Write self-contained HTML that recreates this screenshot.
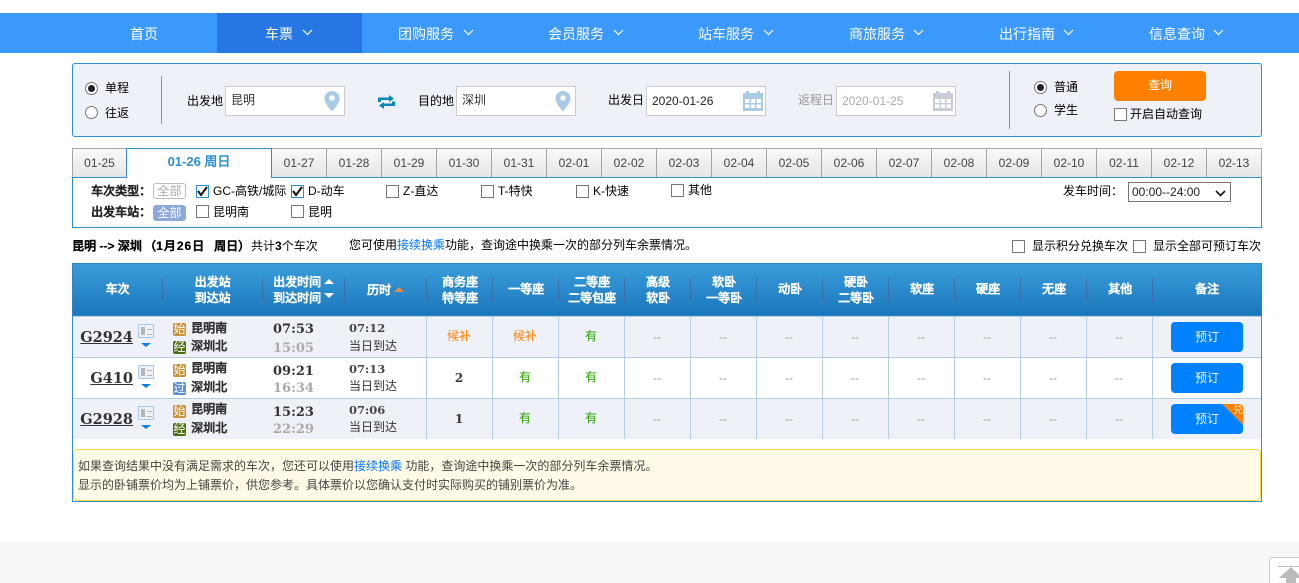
<!DOCTYPE html>
<html lang="zh"><head><meta charset="utf-8"><title>车票</title>
<style>
html{overflow:hidden;height:583px;width:1299px}
html,body{margin:0;padding:0;background:#fff}
body{width:1299px;height:583px;position:relative;overflow:hidden;font:12px/16px "Liberation Sans","WenQuanYi Zen Hei",sans-serif;color:#000}
.a,.a *{box-sizing:border-box}
.a{position:absolute;white-space:nowrap}
.nav{color:#fff;font-size:14px;line-height:20px;top:24px}
.chev{top:29px;width:11px;height:7px}
.inp{background:#fff;border:1px solid #ccc;height:30px;top:86px}
.radio{width:13px;height:13px;border:1px solid #767676;border-radius:50%;background:#fff}
.radio.on:after{content:"";position:absolute;left:2px;top:2px;width:7px;height:7px;border-radius:50%;background:#222}
.cb{width:13px;height:13px;border:1px solid #767676;background:#fff}
.cb.on{border-color:#2b8fd0}
.cb svg{position:absolute;left:-1px;top:-1px}
.tab{top:148px;height:29px;width:55px;background:linear-gradient(#f9f9f9,#e6e6e6);border:1px solid #a5a5a5;border-left:0;border-bottom:0;text-align:center;font:12px/29px "Liberation Sans",sans-serif;color:#444}
.bd{font-weight:bold;text-shadow:.3px 0 currentColor}
.th{color:#fff;font-weight:bold;text-shadow:.3px 0 #fff;text-align:center;line-height:16px;font-size:12px}
.sep{width:1px;height:24px;top:278px;background:#3b6ea8}
.vl{width:1px;top:316px;height:123px;background:#b1cfe0}
.no{font:bold 14.500px/20px "DejaVu Serif",serif;color:#333;text-decoration:underline;text-align:right;width:72px;left:61px}
.card{left:138px;width:16px;height:14px;border:1px solid #a8c6e6;background:#edf2f9}
.card:before{content:"";position:absolute;left:2px;top:2px;width:4px;height:8px;background:#b5b5b5}
.card:after{content:"";position:absolute;left:8px;top:4px;width:5px;height:4px;border-top:1px solid #b5b5b5;border-bottom:1px solid #b5b5b5}
.tri{left:141px;width:0;height:0;border:5px solid transparent;border-top:4px solid #0a7fe8;border-bottom:0}
.ic{left:173px;width:13px;height:13px;border-radius:2px;color:#fff;font-size:12px;line-height:13px;text-align:center;overflow:hidden}
.st{left:191px;font-weight:bold;text-shadow:.3px 0 #333;font-size:12px;line-height:16px;color:#333}
.t1{left:273px;font:bold 13px/16px "DejaVu Serif",serif;color:#333}
.t2{left:273px;font:bold 13px/16px "DejaVu Serif",serif;color:#aaa}
.d1{left:349px;font:bold 11.500px/16px "DejaVu Serif",serif;color:#444}
.d2{left:349px;font-size:12px;line-height:16px;color:#333}
.c{text-align:center;width:66px;font-size:12px;line-height:16px;margin-left:-1px}
.o{color:#ff8000}.g{color:#2aa000}.x{color:#999}
.b{color:#333;font:bold 12px/16px "DejaVu Serif",serif}
.btn{left:1171px;width:72px;height:30px;border-radius:4px;background:#0081ff;color:#fff;text-align:center;line-height:30px;font-size:12px}
</style></head><body>

<div class="a" style="left:0;top:13px;width:1299px;height:40px;background:#3b99fc"></div>
<div class="a" style="left:217px;top:13px;width:145px;height:40px;background:#2676e3"></div>
<div class="a nav" style="left:130px">首页</div>
<div class="a nav" style="left:265px">车票</div>
<div class="a nav" style="left:398px">团购服务</div>
<div class="a nav" style="left:548px">会员服务</div>
<div class="a nav" style="left:698px">站车服务</div>
<div class="a nav" style="left:849px">商旅服务</div>
<div class="a nav" style="left:999px">出行指南</div>
<div class="a nav" style="left:1149px">信息查询</div>
<svg class="a chev" style="left:302px" viewBox="0 0 11 7"><path d="M1 1l4.500 4.500L10 1" fill="none" stroke="#fff" stroke-width="1.200"/></svg>
<svg class="a chev" style="left:463px" viewBox="0 0 11 7"><path d="M1 1l4.500 4.500L10 1" fill="none" stroke="#fff" stroke-width="1.200"/></svg>
<svg class="a chev" style="left:613px" viewBox="0 0 11 7"><path d="M1 1l4.500 4.500L10 1" fill="none" stroke="#fff" stroke-width="1.200"/></svg>
<svg class="a chev" style="left:763px" viewBox="0 0 11 7"><path d="M1 1l4.500 4.500L10 1" fill="none" stroke="#fff" stroke-width="1.200"/></svg>
<svg class="a chev" style="left:913px" viewBox="0 0 11 7"><path d="M1 1l4.500 4.500L10 1" fill="none" stroke="#fff" stroke-width="1.200"/></svg>
<svg class="a chev" style="left:1063px" viewBox="0 0 11 7"><path d="M1 1l4.500 4.500L10 1" fill="none" stroke="#fff" stroke-width="1.200"/></svg>
<svg class="a chev" style="left:1213px" viewBox="0 0 11 7"><path d="M1 1l4.500 4.500L10 1" fill="none" stroke="#fff" stroke-width="1.200"/></svg>

<div class="a" style="left:72px;top:63px;width:1190px;height:74px;background:#eef1f8;border:1px solid #2b8fd0;border-radius:3px"></div>
<div class="a radio on" style="left:85px;top:82px"></div><div class="a" style="left:105px;top:80px">单程</div>
<div class="a radio" style="left:85px;top:106px"></div><div class="a" style="left:105px;top:105px">往返</div>
<div class="a" style="left:161px;top:76px;width:1px;height:48px;background:#5c9cc7"></div>
<div class="a" style="left:187px;top:93px">出发地</div>
<div class="a inp" style="left:225px;width:120px"></div><div class="a" style="left:231px;top:92px;color:#333">昆明</div>
<svg class="a" style="left:324px;top:91px" width="16" height="21" viewBox="0 0 16 21"><path d="M8 0C3.500 0 0.500 3.300 0.500 7.500 0.500 12 5.500 17.500 8 20.500 10.500 17.500 15.500 12 15.500 7.500 15.500 3.300 12.500 0 8 0Z" fill="#a9cbe6"/><circle cx="8" cy="7" r="2.800" fill="#fff"/></svg>
<svg class="a" style="left:378px;top:95px" width="17" height="14" viewBox="0 0 17 14"><path d="M0 7V2.500h11V0l5 3.500L11 7V5H3v2z" fill="#0b86ba"/><path d="M17 6.500V11H6v3L1 10.500 6 7v1.500h8v-2z" fill="#0b86ba"/></svg>
<div class="a" style="left:418px;top:93px">目的地</div>
<div class="a inp" style="left:456px;width:120px"></div><div class="a" style="left:462px;top:92px;color:#333">深圳</div>
<svg class="a" style="left:555px;top:91px" width="16" height="21" viewBox="0 0 16 21"><path d="M8 0C3.500 0 0.500 3.300 0.500 7.500 0.500 12 5.500 17.500 8 20.500 10.500 17.500 15.500 12 15.500 7.500 15.500 3.300 12.500 0 8 0Z" fill="#a9cbe6"/><circle cx="8" cy="7" r="2.800" fill="#fff"/></svg>
<div class="a" style="left:608px;top:92px">出发日</div>
<div class="a inp" style="left:646px;width:120px"></div><div class="a" style="left:652px;top:93px;color:#222">2020-01-26</div>
<svg class="a" style="left:743px;top:91px" width="20" height="20" viewBox="0 0 20 20"><path d="M0 2h3V0h3v2h8V0h3v2h3v18H0z" fill="#a9cbe6"/><path d="M2 8h4.500v4H2zM8 8h4v4H8zM13.500 8H18v4h-4.500zM2 13.500h4.500V17H2zM8 13.500h4V17H8zM13.500 13.500H18V17h-4.500z" fill="#fff"/></svg>
<div class="a" style="left:798px;top:92px;color:#999">返程日</div>
<div class="a inp" style="left:836px;width:120px"></div><div class="a" style="left:842px;top:93px;color:#aaa">2020-01-25</div>
<svg class="a" style="left:933px;top:91px" width="20" height="20" viewBox="0 0 20 20"><path d="M0 2h3V0h3v2h8V0h3v2h3v18H0z" fill="#c8ccd8"/><path d="M2 8h4.500v4H2zM8 8h4v4H8zM13.500 8H18v4h-4.500zM2 13.500h4.500V17H2zM8 13.500h4V17H8zM13.500 13.500H18V17h-4.500z" fill="#fff"/></svg>
<div class="a" style="left:1009px;top:71px;width:1px;height:58px;background:#5c9cc7"></div>
<div class="a radio on" style="left:1034px;top:81px"></div><div class="a" style="left:1054px;top:79px">普通</div>
<div class="a radio" style="left:1034px;top:104px"></div><div class="a" style="left:1054px;top:102px">学生</div>
<div class="a" style="left:1114px;top:71px;width:92px;height:30px;background:#ff8000;border-radius:4px;color:#fff;text-align:center;line-height:28px">查询</div>
<div class="a cb" style="left:1114px;top:108px"></div><div class="a" style="left:1130px;top:106px">开启自动查询</div>

<div class="a" style="left:72px;top:177px;width:1190px;height:51px;border:1px solid #2b8fd0;background:#fff"></div>
<div class="a tab" style="left:72px;width:55px;border-left:1px solid #a5a5a5">01-25</div>
<div class="a" style="left:126px;top:148px;width:146px;height:30px;background:#fff;border:1px solid #2b8fd0;border-bottom:0;text-align:center;font:bold 13px/26px 'Liberation Sans','WenQuanYi Zen Hei',sans-serif;color:#2b8fd0">01-26 周日</div>
<div class="a tab" style="left:272px">01-27</div><div class="a tab" style="left:327px">01-28</div><div class="a tab" style="left:382px">01-29</div><div class="a tab" style="left:437px">01-30</div><div class="a tab" style="left:492px">01-31</div><div class="a tab" style="left:547px">02-01</div><div class="a tab" style="left:602px">02-02</div><div class="a tab" style="left:657px">02-03</div><div class="a tab" style="left:712px">02-04</div><div class="a tab" style="left:767px">02-05</div><div class="a tab" style="left:822px">02-06</div><div class="a tab" style="left:877px">02-07</div><div class="a tab" style="left:932px">02-08</div><div class="a tab" style="left:987px">02-09</div><div class="a tab" style="left:1042px">02-10</div><div class="a tab" style="left:1097px">02-11</div><div class="a tab" style="left:1152px">02-12</div><div class="a tab" style="left:1207px">02-13</div>

<div class="a bd" style="left:91px;top:183px;color:#222">车次类型：</div>
<div class="a" style="left:153px;top:183px;width:33px;height:16px;border:1px solid #bbb;border-radius:3px;text-align:center;line-height:14px;color:#aaa">全部</div>
<div class="a cb on" style="left:196px;top:185px"><svg width="13" height="13" viewBox="0 0 13 13"><path d="M2 6l3 4 6-8" fill="none" stroke="#111" stroke-width="2"/></svg></div><div class="a" style="left:213px;top:183px">GC-高铁/城际</div>
<div class="a cb on" style="left:291px;top:185px"><svg width="13" height="13" viewBox="0 0 13 13"><path d="M2 6l3 4 6-8" fill="none" stroke="#111" stroke-width="2"/></svg></div><div class="a" style="left:308px;top:183px">D-动车</div>
<div class="a cb" style="left:386px;top:185px"></div><div class="a" style="left:403px;top:183px">Z-直达</div>
<div class="a cb" style="left:481px;top:185px"></div><div class="a" style="left:498px;top:183px">T-特快</div>
<div class="a cb" style="left:576px;top:185px"></div><div class="a" style="left:593px;top:183px">K-快速</div>
<div class="a cb" style="left:671px;top:184px"></div><div class="a" style="left:688px;top:182px">其他</div>
<div class="a" style="left:1063px;top:183px">发车时间：</div>
<div class="a" style="left:1128px;top:182px;width:103px;height:20px;border:1px solid #767676;line-height:18px;padding-left:3px;color:#222">00:00--24:00<svg class="a" style="left:86px;top:7px" width="11" height="7" viewBox="0 0 11 7"><path d="M1 1l4.500 4.500L10 1" fill="none" stroke="#111" stroke-width="1.600"/></svg></div>
<div class="a bd" style="left:91px;top:204px;color:#222">出发车站：</div>
<div class="a" style="left:153px;top:205px;width:33px;height:16px;background:#8ca9d9;border-radius:3px;text-align:center;line-height:16px;color:#fff">全部</div>
<div class="a cb" style="left:196px;top:205px"></div><div class="a" style="left:213px;top:204px">昆明南</div>
<div class="a cb" style="left:291px;top:205px"></div><div class="a" style="left:308px;top:204px">昆明</div>

<div class="a bd" style="left:72px;top:238px">昆明 --&gt; 深圳</div>
<div class="a bd" style="left:144px;top:238px">（<span style="letter-spacing:1px">1月26日</span></div>
<div class="a bd" style="left:214px;top:238px">周日）</div>
<div class="a" style="left:251px;top:238px">共计<b>3</b>个车次</div>
<div class="a" style="left:349px;top:237px">您可使用<span style="color:#0077ff">接续换乘</span>功能，查询途中换乘一次的部分列车余票情况。</div>
<div class="a cb" style="left:1012px;top:240px"></div><div class="a" style="left:1032px;top:238px">显示积分兑换车次</div>
<div class="a cb" style="left:1133px;top:240px"></div><div class="a" style="left:1153px;top:238px">显示全部可预订车次</div>

<div class="a" style="left:72px;top:263px;width:1190px;height:239px;border:1px solid #2b8fd0"></div>
<div class="a" style="left:72px;top:263px;width:1190px;height:53px;background:linear-gradient(#3a9ddb,#1b77bc);border:1px solid #2b84c4"></div>
<div class="a" style="left:73px;top:316px;width:1188px;height:41px;background:#eef1f8"></div>
<div class="a" style="left:73px;top:399px;width:1188px;height:40px;background:#eef1f8"></div>
<div class="a" style="left:73px;top:316px;width:1188px;height:1px;background:#b1cfe0"></div>
<div class="a" style="left:73px;top:357px;width:1188px;height:1px;background:#b1cfe0"></div>
<div class="a" style="left:73px;top:398px;width:1188px;height:1px;background:#b1cfe0"></div>

<div class="a sep" style="left:162px"></div><div class="a sep" style="left:262px"></div><div class="a sep" style="left:344px"></div><div class="a sep" style="left:426px"></div><div class="a sep" style="left:492px"></div><div class="a sep" style="left:558px"></div><div class="a sep" style="left:624px"></div><div class="a sep" style="left:690px"></div><div class="a sep" style="left:756px"></div><div class="a sep" style="left:822px"></div><div class="a sep" style="left:888px"></div><div class="a sep" style="left:954px"></div><div class="a sep" style="left:1020px"></div><div class="a sep" style="left:1086px"></div><div class="a sep" style="left:1152px"></div>
<div class="a vl" style="left:426px"></div><div class="a vl" style="left:492px"></div><div class="a vl" style="left:558px"></div><div class="a vl" style="left:624px"></div><div class="a vl" style="left:690px"></div><div class="a vl" style="left:756px"></div><div class="a vl" style="left:822px"></div><div class="a vl" style="left:888px"></div><div class="a vl" style="left:954px"></div><div class="a vl" style="left:1020px"></div><div class="a vl" style="left:1086px"></div><div class="a vl" style="left:1152px"></div>

<div class="a th" style="left:73px;width:89px;top:281px">车次</div>
<div class="a th" style="left:163px;width:99px;top:274px">出发站<br>到达站</div>
<div class="a th" style="left:273px;top:274px;text-align:left">出发时间<br>到达时间</div>
<svg class="a" style="left:324px;top:279px" width="10" height="19" viewBox="0 0 10 19"><path d="M0 5L5 0l5 5zM0 14h10l-5 5z" fill="#fff"/></svg>
<div class="a th" style="left:367px;top:282px;text-align:left">历时</div>
<svg class="a" style="left:394px;top:287px" width="10" height="5" viewBox="0 0 10 5"><path d="M0 5L5 0l5 5z" fill="#f08a3c"/></svg>
<div class="a th" style="left:427px;width:66px;top:274px">商务座<br>特等座</div>
<div class="a th" style="left:493px;width:66px;top:281px">一等座</div>
<div class="a th" style="left:559px;width:66px;top:274px">二等座<br>二等包座</div>
<div class="a th" style="left:625px;width:66px;top:274px">高级<br>软卧</div>
<div class="a th" style="left:691px;width:66px;top:274px">软卧<br>一等卧</div>
<div class="a th" style="left:757px;width:66px;top:281px">动卧</div>
<div class="a th" style="left:823px;width:66px;top:274px">硬卧<br>二等卧</div>
<div class="a th" style="left:889px;width:66px;top:281px">软座</div>
<div class="a th" style="left:955px;width:66px;top:281px">硬座</div>
<div class="a th" style="left:1021px;width:66px;top:281px">无座</div>
<div class="a th" style="left:1087px;width:66px;top:281px">其他</div>
<div class="a th" style="left:1153px;width:108px;top:281px">备注</div>

<div class="a no" style="top:328px">G2924</div><div class="a card" style="top:324px"></div><div class="a tri" style="top:343px"></div>
<div class="a ic" style="top:323px;background:#c8913c">始</div><div class="a st" style="top:320px">昆明南</div>
<div class="a ic" style="top:341px;background:#4e6e10">经</div><div class="a st" style="top:338px">深圳北</div>
<div class="a t1" style="top:322px">07:53</div><div class="a t2" style="top:341px">15:05</div>
<div class="a d1" style="top:320px">07:12</div><div class="a d2" style="top:338px">当日到达</div>

<div class="a no" style="top:369px">G410</div><div class="a card" style="top:365px"></div><div class="a tri" style="top:384px"></div>
<div class="a ic" style="top:364px;background:#c8913c">始</div><div class="a st" style="top:360px">昆明南</div>
<div class="a ic" style="top:382px;background:#5b8fd8">过</div><div class="a st" style="top:379px">深圳北</div>
<div class="a t1" style="top:364px">09:21</div><div class="a t2" style="top:381px">16:34</div>
<div class="a d1" style="top:361px">07:13</div><div class="a d2" style="top:378px">当日到达</div>

<div class="a no" style="top:410px">G2928</div><div class="a card" style="top:406px"></div><div class="a tri" style="top:425px"></div>
<div class="a ic" style="top:405px;background:#c8913c">始</div><div class="a st" style="top:401px">昆明南</div>
<div class="a ic" style="top:423px;background:#4e6e10">经</div><div class="a st" style="top:420px">深圳北</div>
<div class="a t1" style="top:405px">15:23</div><div class="a t2" style="top:422px">22:29</div>
<div class="a d1" style="top:402px">07:06</div><div class="a d2" style="top:419px">当日到达</div>

<div class="a c o" style="left:427px;top:328px">候补</div><div class="a c o" style="left:493px;top:328px">候补</div><div class="a c g" style="left:559px;top:328px">有</div>
<div class="a c x" style="left:625px;top:329px">--</div><div class="a c x" style="left:691px;top:329px">--</div><div class="a c x" style="left:757px;top:329px">--</div><div class="a c x" style="left:823px;top:329px">--</div><div class="a c x" style="left:889px;top:329px">--</div><div class="a c x" style="left:955px;top:329px">--</div><div class="a c x" style="left:1021px;top:329px">--</div><div class="a c x" style="left:1087px;top:329px">--</div>

<div class="a c b" style="left:427px;top:370px">2</div><div class="a c g" style="left:493px;top:369px">有</div><div class="a c g" style="left:559px;top:369px">有</div>
<div class="a c x" style="left:625px;top:370px">--</div><div class="a c x" style="left:691px;top:370px">--</div><div class="a c x" style="left:757px;top:370px">--</div><div class="a c x" style="left:823px;top:370px">--</div><div class="a c x" style="left:889px;top:370px">--</div><div class="a c x" style="left:955px;top:370px">--</div><div class="a c x" style="left:1021px;top:370px">--</div><div class="a c x" style="left:1087px;top:370px">--</div>

<div class="a c b" style="left:427px;top:411px">1</div><div class="a c g" style="left:493px;top:410px">有</div><div class="a c g" style="left:559px;top:410px">有</div>
<div class="a c x" style="left:625px;top:411px">--</div><div class="a c x" style="left:691px;top:411px">--</div><div class="a c x" style="left:757px;top:411px">--</div><div class="a c x" style="left:823px;top:411px">--</div><div class="a c x" style="left:889px;top:411px">--</div><div class="a c x" style="left:955px;top:411px">--</div><div class="a c x" style="left:1021px;top:411px">--</div><div class="a c x" style="left:1087px;top:411px">--</div>

<div class="a btn" style="top:322px">预订</div>
<div class="a btn" style="top:363px">预订</div>
<div class="a btn" style="top:404px;overflow:hidden">预订<div class="a" style="right:0;top:0;width:0;height:0;border-top:21px solid #ff8000;border-left:21px solid transparent"></div><div class="a" style="right:0;top:0;color:#ffe6c0;font-size:10px;line-height:13px">兑</div></div>

<div class="a" style="left:73px;top:449px;width:1188px;height:52px;background:#fffbe6;border:1px solid #fdd835;border-radius:5px"></div>
<div class="a" style="left:78px;top:457px;line-height:19px;color:#444">如果查询结果中没有满足需求的车次，您还可以使用<span style="color:#0077ff">接续换乘</span> 功能，查询途中换乘一次的部分列车余票情况。<br>显示的卧铺票价均为上铺票价，供您参考。具体票价以您确认支付时实际购买的铺别票价为准。</div>

<div class="a" style="left:0;top:542px;width:1299px;height:41px;background:#f7f7f7"></div>
<div class="a" style="left:1269px;top:557px;width:40px;height:26px;background:#fff;border:1px solid #ccc;border-bottom:0;border-radius:3px 3px 0 0"></div>
<div class="a" style="left:1278px;top:566px;width:21px;height:1px;background:#bbb"></div>
<svg class="a" style="left:1279px;top:567px" width="20" height="16" viewBox="0 0 20 16"><path d="M0 11L12 0l8 8v3h-3v5H7v-5z" fill="#bbb"/></svg>
</body></html>
